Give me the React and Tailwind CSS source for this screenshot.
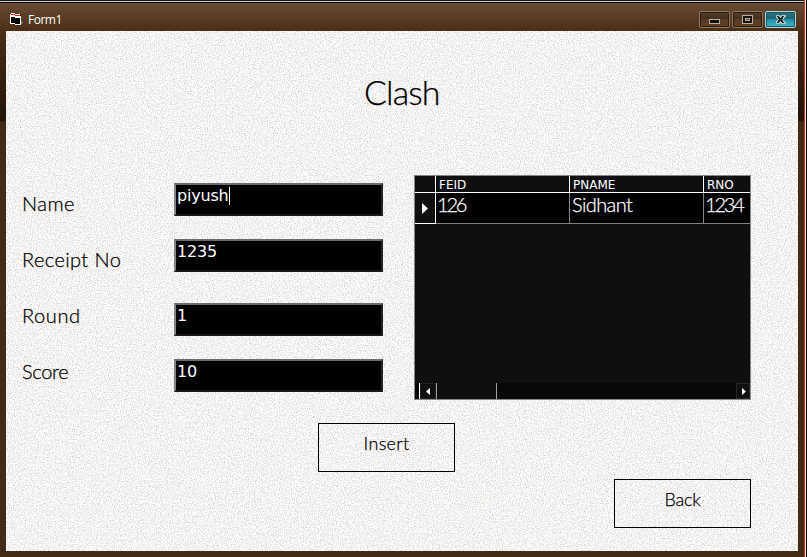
const script = "font-['Lato','Liberation_Sans',sans-serif] font-light [-webkit-text-stroke:0.25px_currentColor]";

function Grain() {
  return (
    <svg className="absolute inset-0 h-full w-full" aria-hidden="true">
      <filter id="grain" x="0" y="0" width="100%" height="100%" colorInterpolationFilters="sRGB">
        <feTurbulence type="fractalNoise" baseFrequency="0.83" numOctaves="2" seed="4" />
        <feColorMatrix values="0.42 0 0 0 0.745  0.42 0 0 0 0.743  0.42 0 0 0 0.735  0 0 0 0 1" />
      </filter>
      <rect width="100%" height="100%" filter="url(#grain)" />
    </svg>
  );
}

function FormIcon() {
  return (
    <svg className="h-[13px] w-[14px]" viewBox="0 0 14 13" shapeRendering="crispEdges">
      <path d="M1 1h5v1h5v10H6v-1H1z" fill="#000" />
      <path d="M0 1h1v10H0zM1 0h4v1H1zM1 10h4v1H1zM5 11h5v1H5zM10 3h1v9h-1zM5 1h5v1H5zM1 3h4v1H1zM5 4h5v1H5z" fill="#fff" />
      <path d="M1 1h4v1H1zM5 2h5v1H5z" fill="#f01818" />
      <path d="M1 2h4v1H1zM5 3h5v1H5z" fill="#fff" />
      <path d="M11 8h1v1h1v1h-1v1h-1z" fill="#808080" />
    </svg>
  );
}

function WindowButton({ kind }) {
  const close = kind === "close";
  return (
    <div
      className={
        close
          ? "flex h-[17px] w-[31px] items-center justify-center rounded-[2px] border border-[#a9dddd] bg-[linear-gradient(#2b7180_0%,#206373_48%,#1f91ab_50%,#46b4cd_100%)] shadow-[inset_0_0_0_1px_#1d5361]"
          : "flex h-[17px] w-[31px] items-center justify-center rounded-[2px] border border-[#8f7966] bg-[linear-gradient(#55402e_0%,#422c1b_48%,#5a3c22_50%,#5e4026_100%)] shadow-[inset_0_0_0_1px_#2c1a0d]"
      }
    >
      <svg className="h-[11px] w-[13px]" viewBox="0 0 13 11" shapeRendering="crispEdges">
        {kind === "min" && <rect x="1.5" y="5.5" width="10" height="4" fill="#14100c" stroke="#b9aea0" />}
        {kind === "max" && (
          <>
            <rect x="1.5" y="1.5" width="10" height="8" fill="#17120e" stroke="#b9aea0" />
            <rect x="4.5" y="4.5" width="4" height="2" fill="#5a3c22" stroke="#b9aea0" />
          </>
        )}
        {close && (
          <>
            <path d="M1.500 1H5.500L6.500 2.500L7.500 1H11.500V3L9 5.500L11.500 8V10H7.500L6.500 8.500L5.500 10H1.500V8L4 5.500L1.500 3z" fill="#b8c4c2" />
            <path d="M2.500 2H5L6.500 4L8 2H10.500L7.800 5.500L10.500 9H8L6.500 7L5 9H2.500L5.200 5.500z" fill="#20272b" />
          </>
        )}
      </svg>
    </div>
  );
}

function Field({ label, value, caret, gap, labelClass }) {
  return (
    <div className={`flex ${gap}`}>
      <div className={`w-[152px] text-[20px] leading-[24px] text-black ${script} ${labelClass}`}>{label}</div>
      <div className="flex h-[33px] w-[209px] items-start border-2 border-t-[#6b6b6b] border-r-[#242424] border-b-[#181818] border-l-[#858585] bg-black pt-[1px] pl-px font-['DejaVu_Sans',sans-serif] text-[16px] leading-[20px] tracking-[-0.200px] text-white">
        {value}
        {caret && <span className="mt-px h-[18px] w-px bg-white" />}
      </div>
    </div>
  );
}

function HeaderCell({ children, className }) {
  return (
    <div className={`border-r border-white pl-[3px] font-['DejaVu_Sans',sans-serif] text-[12px] leading-[19px] text-white ${className}`}>
      {children}
    </div>
  );
}

function DataCell({ children, className }) {
  return (
    <div className={`border-r border-[#858585] bg-black text-[20px] leading-[23px] text-white ${script} ${className}`}>
      {children}
    </div>
  );
}

function DataGrid() {
  return (
    <div className="flex h-[225px] w-[337px] flex-col border border-[#858585] bg-[#0f0f0f]">
      <div className="flex h-[17px] border-b border-white">
        <div className="w-[21px] border-r border-white" />
        <HeaderCell className="w-[134px]">FEID</HeaderCell>
        <HeaderCell className="w-[134px]">PNAME</HeaderCell>
        <HeaderCell className="w-[46px] border-r-0">RNO</HeaderCell>
      </div>
      <div className="flex h-[31px]">
        <div className="flex w-[21px] items-center border-r border-b border-white pl-[7px]">
          <svg className="h-[11px] w-[6px]" viewBox="0 0 6 11"><path d="M0 0L6 5.500L0 11z" fill="#fff" /></svg>
        </div>
        <div className="flex flex-1 border-b border-[#858585]">
          <DataCell className="w-[134px] pl-px tracking-[-2.200px]">126</DataCell>
          <DataCell className="w-[134px] pl-[2px] tracking-[-0.600px]">Sidhant</DataCell>
          <DataCell className="w-[46px] border-r-0 pl-px tracking-[-2.200px]">1234</DataCell>
        </div>
      </div>
      <div className="flex-1" />
      <div className="flex h-[16px] bg-[#070707]">
        <div className="ml-[4px] w-px bg-white" />
        <div className="flex w-[16px] items-center justify-center border border-[#222] bg-[#0f0f0f]">
          <svg className="h-[7px] w-[4px]" viewBox="0 0 4 7"><path d="M4 0L0 3.500L4 7z" fill="#fff" /></svg>
        </div>
        <div className="w-[61px] border-r border-l border-[#a0a0a0] bg-[#0f0f0f]" />
        <div className="flex-1 bg-[repeating-conic-gradient(#0f0f0f_0_25%,#000_0_50%)] bg-[length:2px_2px]" />
        <div className="flex w-[14px] items-center justify-center border border-[#252525] bg-[#0f0f0f] pl-[2px]">
          <svg className="h-[7px] w-[4px]" viewBox="0 0 4 7"><path d="M0 0L4 3.500L0 7z" fill="#fff" /></svg>
        </div>
      </div>
    </div>
  );
}

function FormButton({ children, className }) {
  return (
    <button className={`flex h-[49px] w-[137px] items-start justify-center border border-black pt-[7px] text-[18px] leading-[24px] text-black ${script} ${className}`}>
      {children}
    </button>
  );
}

export default function App() {
  return (
    <div className="flex h-[557px] w-[807px] overflow-hidden bg-black">
      <div className="flex w-[804px] flex-col bg-[linear-gradient(#4b2e17_31px,#25150a_112px,#25150a_121px,#432c17_122px)]">
        <div className="h-px bg-[#171310]" />
        <div className="h-px bg-[#d6d3d6]" />
        <div className="h-px bg-black" />
        <div className="flex h-[28px] items-center justify-between bg-[linear-gradient(#684b33,#4b2e16)] pr-[8px] pl-[10px]">
          <div className="flex items-center gap-[4px] pt-[5px] font-['Open_Sans',sans-serif] text-[12px] leading-[18px] tracking-[-0.500px] text-white">
            <FormIcon />
            <span>Form1</span>
          </div>
          <div className="flex gap-[2px] pt-[5px]">
            <WindowButton kind="min" />
            <WindowButton kind="max" />
            <WindowButton kind="close" />
          </div>
        </div>
        <div className="relative mx-[6px] h-[520px] overflow-hidden bg-[#f1f0ee]">
          <Grain />
          <div className="relative">
            <h1 className={`h-[144px] pt-[41px] pl-[358px] text-[34px] leading-[40px] tracking-[-0.900px] text-black ${script}`}>Clash</h1>
            <div className="flex items-start gap-[31px] pl-[16px]">
              <div className="pt-[8px]">
                <Field label="Name" value="piyush" caret gap="mb-[23px]" labelClass="pt-[8px] tracking-[0.500px]" />
                <Field label="Receipt No" value="1235" gap="mb-[31px]" labelClass="pt-[8px] tracking-[0.400px]" />
                <Field label="Round" value="1" gap="mb-[23px]" labelClass="tracking-[0.600px]" />
                <Field label="Score" value="10" gap="mb-0" labelClass="tracking-[-0.300px]" />
              </div>
              <DataGrid />
            </div>
            <div className="flex flex-col pt-[23px]">
              <FormButton className="ml-[312px] tracking-[0.300px]">Insert</FormButton>
              <FormButton className="mt-[7px] ml-[608px] tracking-[-0.200px]">Back</FormButton>
            </div>
          </div>
        </div>
      </div>
      <div className="w-px bg-[#cf3516]" />
      <div className="w-px bg-[#e6e2e2]" />
    </div>
  );
}
